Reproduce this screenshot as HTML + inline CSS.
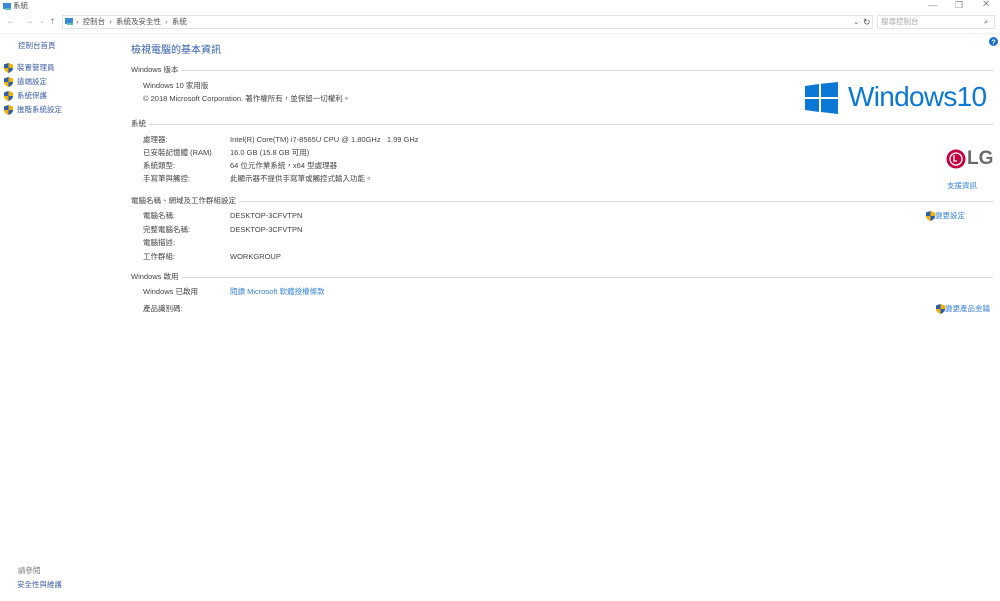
<!DOCTYPE html>
<html><head><meta charset="utf-8"><style>
body{margin:0;width:1000px;height:601px;background:#fff;position:relative;overflow:hidden;font-family:"Liberation Sans","Noto Sans CJK TC",sans-serif;font-size:7.5px;color:#444}
.a{position:absolute;white-space:nowrap;line-height:10px}
.l{color:#3f5fa6}
.b{color:#3a84d6}
.sec{position:absolute;left:131px;right:7px;height:10px;line-height:10px;color:#444}
.sec span{background:#fff;padding-right:3px;position:relative}
.sec:before{content:"";position:absolute;left:0;right:0;top:5px;border-top:1px solid #d5d5d5}
.sh{position:absolute;width:9px;height:10px}
</style></head><body>
<svg class="a" style="left:3px;top:2px" width="9" height="9"><rect x="0" y="1" width="8" height="6" fill="#3a8ad8"/><rect x="2" y="6" width="6" height="2" fill="#6bb"/></svg>
<div class="a" style="left:13px;top:1px;color:#555">系統</div>
<div class="a" style="left:928px;top:0px;color:#888;font-size:9px">—</div>
<div class="a" style="left:955px;top:0px;color:#888;font-size:9px">❐</div>
<div class="a" style="left:982px;top:0px;color:#888;font-size:10px">✕</div>
<div class="a" style="left:6px;top:17px;color:#bbb;font-size:10px">←</div>
<div class="a" style="left:24px;top:17px;color:#bbb;font-size:10px">→</div>
<div class="a" style="left:39px;top:17px;color:#bbb;font-size:7px">⌄</div>
<div class="a" style="left:50px;top:17px;color:#555;font-size:10px">↑</div>
<div style="position:absolute;left:62px;top:15px;width:811px;height:14px;border:1px solid #e3e3e3;box-sizing:border-box"></div>
<svg class="a" style="left:65px;top:18px" width="9" height="8"><rect x="0" y="0" width="8" height="6" fill="#3a8ad8"/><rect x="2" y="5" width="6" height="2" fill="#6bb"/></svg>
<div class="a" style="left:76px;top:17px;color:#555">›&nbsp; 控制台 &nbsp;›&nbsp; 系統及安全性 &nbsp;›&nbsp; 系統</div>
<div class="a" style="left:853px;top:17px;color:#555">⌄</div>
<div class="a" style="left:863px;top:17px;color:#555;font-size:9px">↻</div>
<div style="position:absolute;left:877px;top:15px;width:118px;height:14px;border:1px solid #e3e3e3;box-sizing:border-box"></div>
<div class="a" style="left:881px;top:17px;color:#aaa">搜尋控制台</div>
<div class="a" style="left:984px;top:17px;color:#555">⌕</div>
<div style="position:absolute;left:0;right:0;top:33px;border-top:1px solid #f0f0f0"></div>
<svg class="a" style="left:989px;top:37px" width="9" height="9"><circle cx="4.5" cy="4.5" r="4.5" fill="#1f6fc8"/><text x="4.5" y="7.5" font-size="7" fill="#fff" text-anchor="middle" font-family="Liberation Sans" font-weight="bold">?</text></svg>

<div class="a l" style="left:18px;top:41px">控制台首頁</div>
<svg class="sh" style="left:4px;top:63px"><path d="M4.5 0L9 1.5V5c0 2.5-2 4-4.5 5C2 9 0 7.5 0 5V1.5z" fill="#f0b400"/><path d="M4.5 0V5H0V1.5zM4.5 5H9c0 2.5-2 4-4.5 5z" fill="#2b5cb8"/></svg>
<div class="a l" style="left:17px;top:63px">裝置管理員</div>
<svg class="sh" style="left:4px;top:77px"><path d="M4.5 0L9 1.5V5c0 2.5-2 4-4.5 5C2 9 0 7.5 0 5V1.5z" fill="#f0b400"/><path d="M4.5 0V5H0V1.5zM4.5 5H9c0 2.5-2 4-4.5 5z" fill="#2b5cb8"/></svg>
<div class="a l" style="left:17px;top:77px">遠端設定</div>
<svg class="sh" style="left:4px;top:91px"><path d="M4.5 0L9 1.5V5c0 2.5-2 4-4.5 5C2 9 0 7.5 0 5V1.5z" fill="#f0b400"/><path d="M4.5 0V5H0V1.5zM4.5 5H9c0 2.5-2 4-4.5 5z" fill="#2b5cb8"/></svg>
<div class="a l" style="left:17px;top:91px">系統保護</div>
<svg class="sh" style="left:4px;top:105px"><path d="M4.5 0L9 1.5V5c0 2.5-2 4-4.5 5C2 9 0 7.5 0 5V1.5z" fill="#f0b400"/><path d="M4.5 0V5H0V1.5zM4.5 5H9c0 2.5-2 4-4.5 5z" fill="#2b5cb8"/></svg>
<div class="a l" style="left:17px;top:105px">進階系統設定</div>
<div class="a" style="left:18px;top:566px;color:#777">請參閱</div>
<div class="a l" style="left:17px;top:580px">安全性與維護</div>

<div class="a" style="left:131px;top:44px;font-size:10px;line-height:14px;color:#2f5aa8">檢視電腦的基本資訊</div>

<div class="sec" style="top:65px"><span>Windows 版本</span></div>
<div class="a" style="left:143px;top:81px">Windows 10 家用版</div>
<div class="a" style="left:143px;top:94px">© 2018 Microsoft Corporation. 著作權所有，並保留一切權利。</div>
<svg class="a" style="left:805px;top:82px" width="33" height="32"><path d="M0 4L14 2V15H0z M16 1.7L33 0V15H16z M0 17H14V30L0 28z M16 17H33V32L16 30z" fill="#0a78d4"/></svg>
<div class="a" style="left:848px;top:80px;font-size:28px;line-height:34px;color:#0a78d4;letter-spacing:-0.7px">Windows10</div>

<div class="sec" style="top:119px"><span>系統</span></div>
<div class="a" style="left:143px;top:135px">處理器:</div><div class="a" style="left:230px;top:135px">Intel(R) Core(TM) i7-8565U CPU @ 1.80GHz &nbsp; 1.99 GHz</div>
<div class="a" style="left:143px;top:148px">已安裝記憶體 (RAM)</div><div class="a" style="left:230px;top:148px">16.0 GB (15.8 GB 可用)</div>
<div class="a" style="left:143px;top:161px">系統類型:</div><div class="a" style="left:230px;top:161px">64 位元作業系統，x64 型處理器</div>
<div class="a" style="left:143px;top:174px">手寫筆與觸控:</div><div class="a" style="left:230px;top:174px">此顯示器不提供手寫筆或觸控式輸入功能。</div>
<svg class="a" style="left:946px;top:149px" width="20" height="20"><circle cx="10" cy="10" r="9.5" fill="#c5003e"/><circle cx="10" cy="10" r="6" fill="none" stroke="#fff" stroke-width="1.3"/><path d="M8 6V12H11" stroke="#fff" stroke-width="1.3" fill="none"/></svg>
<div class="a" style="left:967px;top:148px;font-size:19px;line-height:22px;font-weight:bold;color:#6b6b6b">LG</div>
<div class="a b" style="left:947px;top:181px">支援資訊</div>

<div class="sec" style="top:196px"><span>電腦名稱、網域及工作群組設定</span></div>
<div class="a" style="left:143px;top:211px">電腦名稱:</div><div class="a" style="left:230px;top:211px">DESKTOP-3CFVTPN</div>
<div class="a" style="left:143px;top:225px">完整電腦名稱:</div><div class="a" style="left:230px;top:225px">DESKTOP-3CFVTPN</div>
<div class="a" style="left:143px;top:238px">電腦描述:</div>
<div class="a" style="left:143px;top:252px">工作群組:</div><div class="a" style="left:230px;top:252px">WORKGROUP</div>
<svg class="sh" style="left:926px;top:211px"><path d="M4.5 0L9 1.5V5c0 2.5-2 4-4.5 5C2 9 0 7.5 0 5V1.5z" fill="#f0b400"/><path d="M4.5 0V5H0V1.5zM4.5 5H9c0 2.5-2 4-4.5 5z" fill="#2b5cb8"/></svg>
<div class="a b" style="left:935px;top:211px">變更設定</div>

<div class="sec" style="top:272px"><span>Windows 啟用</span></div>
<div class="a" style="left:143px;top:287px">Windows 已啟用</div><div class="a b" style="left:230px;top:287px">閱讀 Microsoft 軟體授權條款</div>
<div class="a" style="left:143px;top:304px">產品識別碼:</div>
<svg class="sh" style="left:936px;top:304px"><path d="M4.5 0L9 1.5V5c0 2.5-2 4-4.5 5C2 9 0 7.5 0 5V1.5z" fill="#f0b400"/><path d="M4.5 0V5H0V1.5zM4.5 5H9c0 2.5-2 4-4.5 5z" fill="#2b5cb8"/></svg>
<div class="a b" style="left:945px;top:304px">變更產品金鑰</div>
</body></html>
